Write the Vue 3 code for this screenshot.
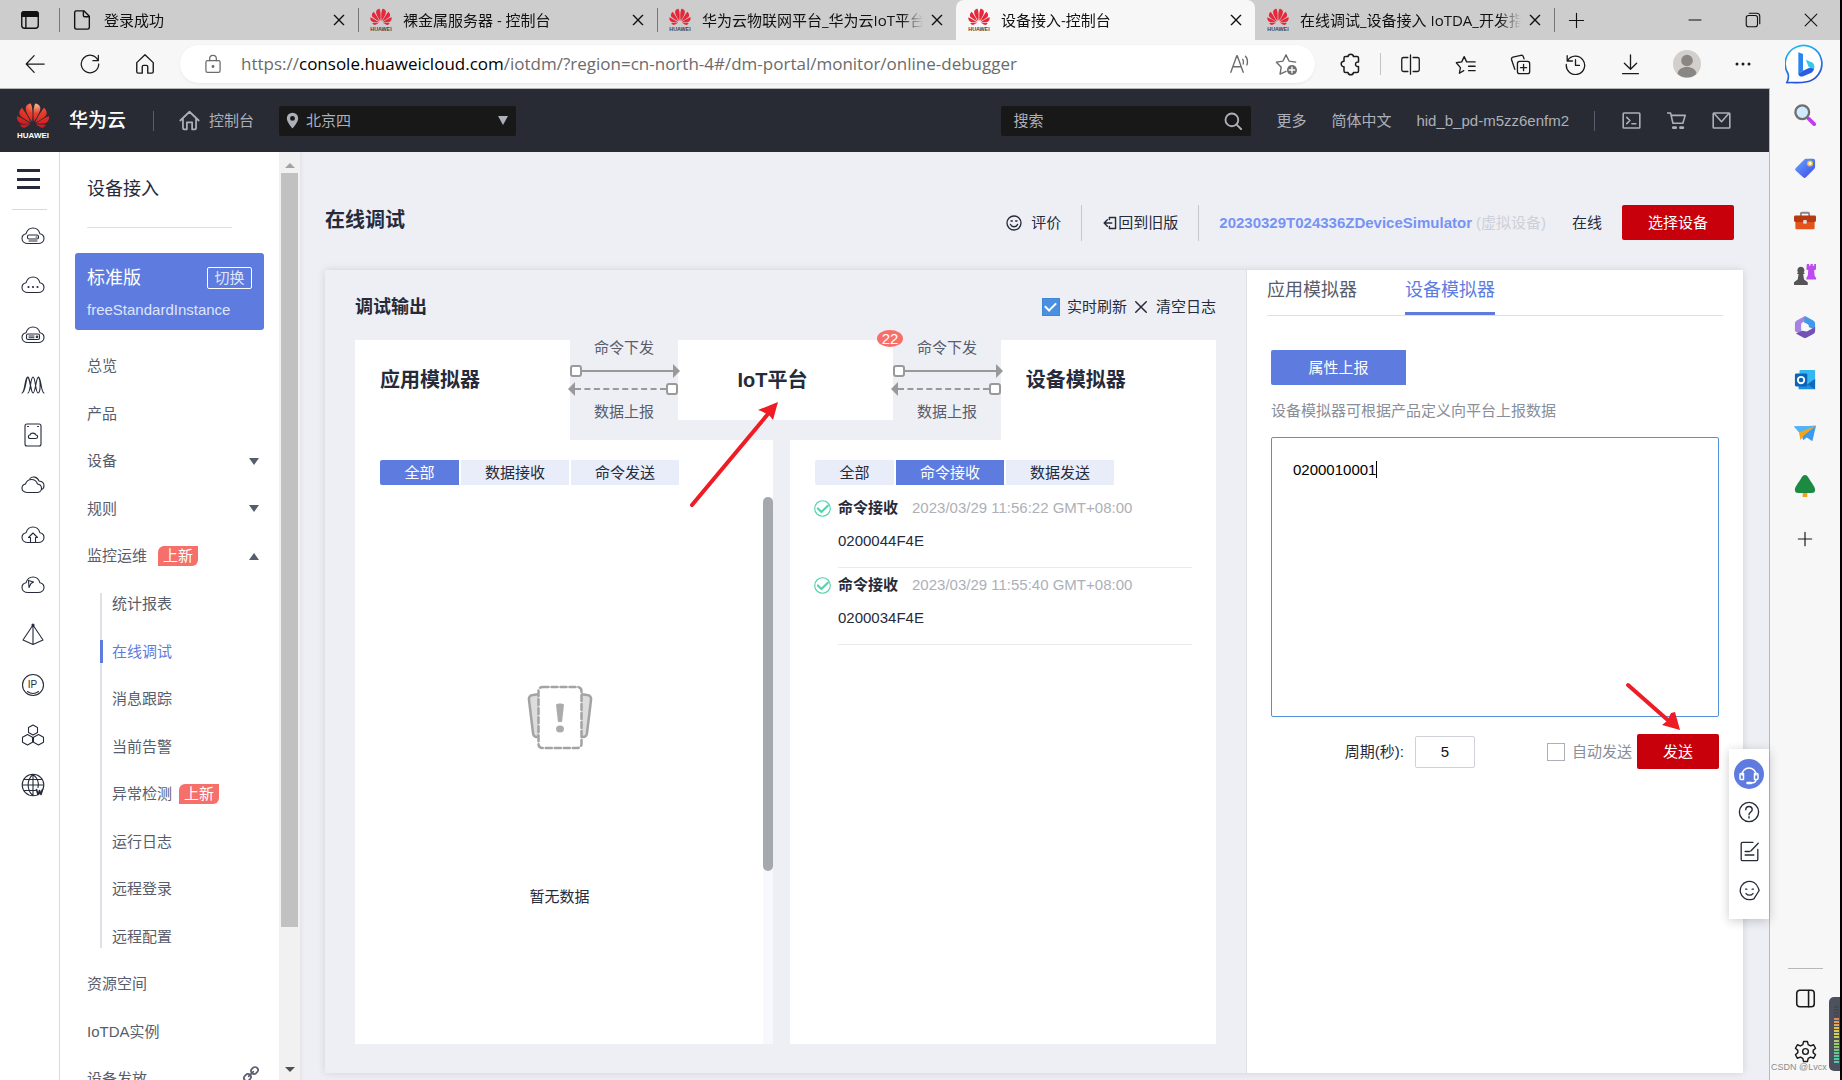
<script setup>
import { h, ref } from 'vue'

const cloud = '<path d="M7 19.500C3.500 19.500 1 17.400 1 14.500c0-2.500 1.700-4.200 4-4.700C6 6.500 8.700 4 12 4s6 2.500 7 5.800c2.300.5 4 2.200 4 4.700 0 2.900-2.500 5-6 5z"/>'
const huawei = 'M3.67 6.14S1.82 7.91 1.72 9.78v.35c.08 1.51 1.22 2.4 1.22 2.4 1.83 1.79 6.26 4.04 7.3 4.55 0 0 .06.03.1-.01l.02-.04v-.04C7.52 10.8 3.67 6.14 3.67 6.14zM9.65 18.6c-.02-.08-.1-.08-.1-.08l-7.38.26c.8 1.43 2.15 2.53 3.56 2.2.96-.25 3.16-1.78 3.88-2.3.06-.05.04-.09.04-.09zm.08-.78C6.49 15.63.21 12.28.21 12.28c-.15.46-.2.9-.21 1.3v.07c0 1.07.4 1.82.4 1.82.8 1.69 2.34 2.2 2.34 2.2.7.3 1.4.31 1.4.31.12.02 4.4 0 5.54 0 .05 0 .08-.05.08-.05v-.06c0-.03-.03-.05-.03-.05zM9.06 3.19a3.42 3.42 0 00-2.57 3.15v.41c.03.6.16 1.05.16 1.05.66 2.9 3.86 7.65 4.55 8.65.05.05.1.03.1.03a.1.1 0 00.06-.1c1.06-10.6-1.11-13.42-1.11-13.42-.32.02-1.19.23-1.19.23zm8.3 2.27s-.49-1.8-2.44-2.28c0 0-.57-.14-1.17-.22 0 0-2.18 2.81-1.12 13.43.01.07.06.08.06.08.07.03.1-.03.1-.03.72-1.03 3.9-5.76 4.55-8.64 0 0 .36-1.4.02-2.34zm-2.92 13.07s-.07 0-.09.05c0 0-.01.07.03.1.7.51 2.85 2 3.88 2.3 0 0 .16.05.43.06h.14c.69-.02 1.9-.37 3-2.26l-7.4-.25zm7.83-8.41c.14-2.06-1.94-3.97-1.94-3.98 0 0-3.85 4.66-6.67 10.8 0 0-.03.08.02.13l.04.01h.06c1.06-.53 5.46-2.77 7.28-4.54 0 0 1.15-.93 1.21-2.42zm1.52 2.14s-6.28 3.37-9.52 5.55c0 0-.05.04-.03.11 0 0 .03.06.07.06 1.16 0 5.56 0 5.67-.02 0 0 .57-.02 1.27-.29 0 0 1.56-.5 2.37-2.27 0 0 .73-1.45.17-3.14z'

const icons = {
  tabs: '<rect x="3" y="3" width="18" height="18" rx="3"/><path d="M3 8V6a3 3 0 013-3h12a3 3 0 013 3v2z" fill="currentColor"/><path d="M7.500 8v13"/>',
  doc: '<path d="M5 2h9l6 6v12a2 2 0 01-2 2H6a2 2 0 01-2-2V4a2 2 0 012-2zM13.500 2v5a1.500 1.500 0 001.500 1.500h5"/>',
  close: '<path d="M5 5l14 14M19 5L5 19"/>',
  plus: '<path d="M12 2v20M2 12h20"/>',
  minus: '<path d="M4 12h16"/>',
  restore: '<rect x="3" y="6" width="15" height="15" rx="3"/><path d="M7 3h10a4 4 0 014 4v10"/>',
  back: '<path d="M23 12H2M11 2L1.500 12l9.500 10"/>',
  reload: '<path d="M21.500 7.500A10.500 10.500 0 1022.500 12M22 1.500v6.500h-6.500"/>',
  home: '<path d="M3 10.500L12 2l9 8.500V20.500a1.500 1.500 0 01-1.500 1.500H15v-7a1.500 1.500 0 00-1.500-1.500h-3A1.500 1.500 0 009 15v7H4.500A1.500 1.500 0 013 20.500z"/>',
  lock: '<rect x="3.500" y="8" width="17" height="14" rx="2"/><path d="M8 8V5.500a4 4 0 018 0V8"/><circle cx="12" cy="15" r="1" fill="currentColor"/>',
  read: '<path d="M2 21L8.500 3h.5l6.500 18M4.500 15h8.500M15 7c1 1.500 1 3.500.5 5M18 3.500c2.500 3 2.500 6.500 1.500 9.500M14 2.500"/>',
  starplus: '<path d="M12 20l-6.500 3 1.300-7.500L1.500 10l7.200-1.200L12 2l3.300 6.800 7.200 1.200"/><circle cx="18.500" cy="18.500" r="5.500" fill="#6f6f6f" stroke="none"/><path d="M18.500 15.500v6M15.500 18.500h6" stroke="#fff"/>',
  ext: '<path d="M9 4.500a2.800 2.800 0 015.500 0H18a1.500 1.500 0 011.500 1.500v4c-4-.7-4 5.200 0 4.600V19a1.500 1.500 0 01-1.500 1.500h-3.500a2.800 2.800 0 01-5.500 0H6.500A1.500 1.500 0 015 19v-4.200a2.800 2.800 0 010-5.600V6a1.500 1.500 0 011.500-1.500z"/>',
  split: '<path d="M12 1v22M9 4H4a2 2 0 00-2 2v12a2 2 0 002 2h5M15 4h5a2 2 0 012 2v12a2 2 0 01-2 2h-5"/>',
  starlist: '<path d="M10 19l-5 3 1.200-6.500L1.500 10l6.200-1L10.500 3l2.800 6H23M15.500 14H23M15.500 19H23M14 9"/>',
  collect: '<rect x="8.500" y="8.500" width="14" height="14" rx="2.500"/><path d="M15.500 12v7M12 15.500h7M5.500 17.500L1.800 6.500A2.300 2.300 0 013.300 3.600L12.500 1.500a2.300 2.300 0 012.700 1.500l.8 2.500"/>',
  history: '<path d="M3 7.500A10.500 10.500 0 111.500 12M2.500 2v6h6M12 6.500V13h4.500"/>',
  download: '<path d="M12 1v16M5 10.500l7 7 7-7M3 22.500h18"/>',
  avatar: '<circle cx="12" cy="12" r="12" fill="#d2cfcc" stroke="none"/><circle cx="12" cy="9" r="5" fill="#8a8683" stroke="none"/><path d="M4 20.500c0-8 16-8 16 0a12 12 0 01-16 0z" fill="#8a8683" stroke="none"/>',
  dots: '<g fill="currentColor" stroke="none"><circle cx="4" cy="12" r="2"/><circle cx="12" cy="12" r="2"/><circle cx="20" cy="12" r="2"/></g>',
  bing: '<defs><linearGradient id="bg1" x1="0" y1="0" x2=".3" y2="1"><stop offset="0" stop-color="#22c3f3"/><stop offset="1" stop-color="#2353d8"/></linearGradient></defs><path d="M1 23.200c1-1.500 1.300-3.500.8-5.500A11 11 0 1112.200 22.800c-4 .8-7.500 0-11.200.4z" fill="#fff" stroke="url(#bg1)" stroke-width="1"/><path d="M8 5l2.800 1v10l-2.800 2z" fill="#2a86ee" stroke="none"/><path d="M8 17.800l2.800-1.800 3.200-1.500 3.300-1c.6 1.500-.3 3-1.500 3.700L11 19.300c-1.500.7-3-.2-3-1.500z" fill="#2a5de0" stroke="none"/><path d="M12.500 9.500l3.500 1.500c1.600.8 2 2.800 1.200 4l-3-1.200z" fill="#35c8e8" stroke="none"/>',
  chome: '<path d="M1.500 12L12 2l10.500 10M4.500 10v10.500a1.500 1.500 0 001.500 1.500h3v-8h6v8h3a1.500 1.500 0 001.500-1.500V10"/>',
  pin: '<path d="M12 1a8 8 0 00-8 8c0 5.500 8 14 8 14s8-8.500 8-14a8 8 0 00-8-8zm0 11.500A3.500 3.500 0 1112 5.500a3.500 3.500 0 010 7z" fill="currentColor" stroke="none"/>',
  search: '<circle cx="10.500" cy="10.500" r="8.500"/><path d="M16.500 16.500L23 23"/>',
  term: '<rect x="1.500" y="2.500" width="21" height="19" rx="1"/><path d="M6 8l4 4-4 4M12.500 16h5"/>',
  cart: '<path d="M0 2.500h4.500l3 13h12.500l3-10H5.500"/><path d="M8 21h3M17 21h3" stroke-width="3.500"/>',
  mail: '<rect x="1.500" y="2.500" width="21" height="19" rx="1"/><path d="M3 3.500l9 10 9-10"/>',
  cserver: cloud + '<rect x="6.500" y="11" width="11" height="4" rx="1.500"/><path d="M8 17h8M15 13h1"/>',
  cdots: cloud + '<g fill="currentColor" stroke="none"><circle cx="7.500" cy="14" r="1.100"/><circle cx="12" cy="14" r="1.100"/><circle cx="16.500" cy="14" r="1.100"/></g>',
  chost: cloud + '<rect x="5.500" y="11" width="13" height="5.500" rx="1.500"/><path d="M8 13h5M8 14.700h5"/><circle cx="16" cy="13.800" r=".8"/>',
  wave: '<path d="M1 20C4 20 4 4 6.500 4S9.500 20 12 20 15 4 17.500 4 20 20 23 20M2 19C5 16 5 4 7 4s3 16 5 16M7 20C9.500 20 9.500 4 12 4s2.500 16 5 16S20 8 17.500 4"/>',
  disk: '<rect x="4" y="1" width="16" height="22" rx="2"/><path d="M9.500 15.500c-3 0-2.500-3.500-.5-3.500.7-2.500 5-2.500 6 0 2.200 0 2.200 3.500-.3 3.500z"/><path d="M6.500 3.500h1M16.500 3.500h1"/>',
  clouds: '<path d="M6 19.500c-3.200 0-5-2-5-4.300 0-2.400 1.600-3.800 3.500-4.200C5.500 8 8 6.500 10.500 6.500S15.500 8 16.500 11c2.500.4 4 2 4 4.200 0 2.400-2 4.300-4.500 4.300z"/><path d="M9 5.500C11 3 16.500 3.500 18 8c3 .3 5 2.200 5 4.700 0 2-1 3.200-2.500 3.800"/>',
  cup: cloud + '<path d="M9.500 19v-4.500H7.500L12 10l4.500 4.500h-2V19"/>',
  cplane: cloud + '<path d="M7.500 7.500l5 1.500-2.500 1.500-2 4z"/>',
  prism: '<path d="M12 2L2 17l10 4.500L22 17zM12 2v19.500"/><circle cx="12" cy="2" r="1" fill="currentColor"/>',
  ring: '<circle cx="12" cy="12" r="10.500"/><path d="M6.500 18.500c3.500 2.500 7.500 2.500 11 0"/>',
  hex: '<path d="M12 2l4.500 2.500v5L12 12 7.500 9.500v-5zM6.500 11.500l5 2.800v5L6.500 22l-5-2.700v-5zM17.500 11.500l5 2.800v5l-5 2.700-5-2.700v-5z"/>',
  globe: '<circle cx="12" cy="12" r="10.800"/><path d="M1.500 12h21M12 1.500v21M3.500 6.500h17M3.500 17.500h11M12 1.500c-6.500 5-6.500 16 0 21M12 1.500c5 4 6 9 5 13"/><path d="M15.500 16.500l1.500 5 1.500-4 1.500 4 1.500-5" stroke-width="1.600"/>',
  link: '<g transform="rotate(45 12 12)"><rect x="7.500" y="-1" width="9" height="11" rx="4.500"/><rect x="7.500" y="14" width="9" height="11" rx="4.500"/><path d="M12 7v10"/></g>',
  smile: '<circle cx="12" cy="12" r="10.500"/><path d="M6.500 14a6 6 0 0011 0M7.500 9h2M14.500 9h2"/>',
  exit: '<path d="M2 12h13M7.500 6.500L2 12l5.500 5.500M11 6V2.500h10.500v19H11V18"/>',
  ok: '<circle cx="12" cy="12" r="11" stroke-width="1.600"/><path d="M5.500 12l5 5 9-9" stroke-width="3"/>',
  empty: '<g fill="#ddd" stroke="#a3a3a3" stroke-width="2.500"><path d="M13 9L6 10a4 4 0 00-4 5l4 33a4 4 0 004 4h4zM53 9l7 1a4 4 0 014 5l-4 33a4 4 0 01-4 4h-4z"/><rect x="11.500" y="2" width="43" height="61" rx="4" fill="#fff" stroke-dasharray="6 3"/></g><path d="M29 20c0-2 8-2 8 0l-2 17h-4z" fill="#ababab" stroke="none"/><ellipse cx="33" cy="44" rx="4" ry="3.500" fill="#ababab" stroke="none"/>',
  headset: '<path d="M5 13a7 7 0 0114 0M5 11.500H4a1 1 0 00-1 1v4a1 1 0 001 1h2.500v-6zM19 11.500h1a1 1 0 011 1v4a1 1 0 01-1 1h-2.500v-6zM19 17.500c0 2.500-2 3.500-5 3.500"/><path d="M10.500 21H14" stroke-width="2.500"/>',
  help: '<circle cx="12" cy="12" r="10.500"/><path d="M8.500 9.500a3.500 3.500 0 117 0c0 2.500-3.500 2.500-3.500 5.500M12 17v1.500"/>',
  edit: '<path d="M16 1.500H4a1.500 1.500 0 00-1.500 1.500v18A1.500 1.500 0 004 22.500h16a1.500 1.500 0 001.500-1.500V9.500M22 2.500l-8.500 9M7 12h5M7 16h10"/>',
  face: '<path d="M22 9A10.500 10.500 0 1014 22.300L17 21.500M22 9l1 3-6 9.500"/><path d="M8 15.500c2 2.500 6 2.500 8 0M7.500 10.500h1.500M15 10.500h1.500"/>',
  lens: '<path d="M16 16l6 6" stroke="#c13bf0" stroke-width="4"/><circle cx="9" cy="9" r="7.500" fill="#cfeafc" stroke="#6f6f6f" stroke-width="2.500"/>',
  tag: '<defs><linearGradient id="tg" x1="0" y1="0" x2="1" y2="1"><stop offset="0" stop-color="#6aa7f8"/><stop offset="1" stop-color="#3c47ee"/></linearGradient></defs><path d="M13 2h8a2 2 0 012 2v7a3 3 0 01-1 2l-9 9a2 2 0 01-3 0L2 15a2 2 0 010-3l9-9a3 3 0 012-1z" fill="url(#tg)" stroke="none"/><circle cx="17.500" cy="7" r="2.500" fill="#fff" stroke="#f8c51c" stroke-width="1.500"/>',
  box: '<path d="M7.500 7V4a1 1 0 011-1h7a1 1 0 011 1v3" stroke="#888" stroke-width="2"/><rect x="1.500" y="10" width="21" height="11" rx="1.500" fill="#e2541c" stroke="none"/><rect x="0" y="6" width="24" height="7" rx="1.500" fill="#b93a10" stroke="none"/><rect x="10" y="11" width="4" height="4" rx="1" fill="#ddd" stroke="none"/>',
  chess: '<path d="M14 1h2.500v2H18V1h2.500v2H22V1h2v6l-2 1 .5 6L24 16v2H13.500v-2l1.500-2 .5-6-2-1z" fill="#bd4bf0" stroke="none"/><path d="M7.500 4a4 4 0 013 6.500h1V12H10l1 6 4 3v3H0v-3l4-3 1-6H3.500v-1.500h1A4 4 0 017.500 4z" fill="#555" stroke="none"/>',
  office: '<path d="M12 0L3.500 4.500A4 4 0 001 8v8.500l7 3.500V8l6-4z" fill="#a583e2" stroke="none"/><path d="M12 0l8.500 4.500A4 4 0 0123 8v7l-7-3-1-3-4-2z" fill="#3f9bea" stroke="none"/><path d="M23 12v4c0 2-1 3-2.500 4L14 23.500a4 4 0 01-4 0L2 19l7-3 5 1z" fill="#7352b8" stroke="none"/><path d="M12 7.500l4 2.200v4.500l-4 2.300-4-2.300V9.700z" fill="#f7f7f7" stroke="none"/>',
  outlook: '<rect x="6" y="1" width="17" height="14" rx="1" fill="#35b8f1" stroke="none"/><path d="M5 12l9 4 9-5v11H5z" fill="#1b8fe0" stroke="none"/><path d="M23 11v11l-8-5z" fill="#0f6cbd" stroke="none"/><rect x="1" y="5" width="13.500" height="14" rx="1.500" fill="#0a64ba" stroke="none"/><circle cx="7.700" cy="12" r="3.500" stroke="#fff" stroke-width="2"/>',
  plane: '<path d="M0 5l24-1-4 17-6-4-4 3-2-7z" fill="#3a9af0" stroke="none"/><path d="M0 5l24-1L7 13z" fill="#52b4f5" stroke="none"/><path d="M24 4L5.500 11.500l1.500 8 4-5z" fill="#f2a41a" stroke="none"/>',
  tree: '<rect x="9.500" y="18" width="5" height="6" fill="#f0a01c" stroke="none"/><path d="M12 0c2 0 3.500 2 5 5 2 3.500 6 8 6 11s-2 3.500-4 3.500H5c-2 0-4-.5-4-3.500s4-7.500 6-11c1.500-3 3-5 5-5z" fill="#1d8a42" stroke="none"/>',
  panel: '<rect x="2" y="2.500" width="20" height="19" rx="3.500"/><path d="M15.500 3v18.500"/>',
  gear: '<path d="M10 1.500h4l.8 3.300 2.500 1.400 3.200-1.200 2 3.600-2.500 2.200v2.400l2.500 2.200-2 3.600-3.200-1.200-2.500 1.400L14 22.500h-4l-.8-3.300-2.500-1.400L3.500 19l-2-3.600L4 13.200v-2.400L1.500 8.600l2-3.600 3.200 1.200 2.500-1.400z"/><circle cx="12" cy="12" r="3"/>',
}

function Icon(props) {
  return h('svg', {
    width: props.s, height: props.s, viewBox: `0 0 ${props.vb || 24} ${props.vb || 24}`,
    fill: 'none', stroke: 'currentColor', 'stroke-width': props.w || 1.5,
    'stroke-linecap': 'round', 'stroke-linejoin': 'round', 'aria-hidden': 'true', innerHTML: icons[props.n],
  })
}
Icon.props = ['n', 's', 'vb', 'w']

const browserTabs = [
  { title: '登录成功' },
  { title: '裸金属服务器 - 控制台', brand: true },
  { title: '华为云物联网平台_华为云IoT平台', brand: true },
  { title: '设备接入-控制台', brand: true, active: true },
  { title: '在线调试_设备接入 IoTDA_开发指', brand: true },
]
const toolIcons = ['split', 'starlist', 'collect', 'history', 'download']
const rail = ['cserver', 'cdots', 'chost', 'wave', 'disk', 'clouds', 'cup', 'cplane', 'prism', 'ring', 'hex', 'globe']
const edgeApps = ['lens', 'tag', 'box', 'chess', 'office', 'outlook', 'plane', 'tree']
const menu = [
  { t: '总览' }, { t: '产品' }, { t: '设备', a: 'down' }, { t: '规则', a: 'down' },
  { t: '监控运维', a: 'up', isNew: true },
]
const subMenu = ['统计报表', '在线调试', '消息跟踪', '当前告警', '异常检测', '运行日志', '远程登录', '远程配置']
const menuEnd = [{ t: '资源空间' }, { t: 'IoTDA实例' }, { t: '设备发放', link: true }]
const logs = [
  { time: '2023/03/29 11:56:22 GMT+08:00', data: '0200044F4E' },
  { time: '2023/03/29 11:55:40 GMT+08:00', data: '0200034F4E' },
]
const meter = ['#454955', '#454955', '#454955', '#454955', '#e0855c', '#e09a5c', '#e0a85c', '#dfc04f', '#dccb4f', '#d5d05a', '#c3cf5f', '#b4cc66', '#9fca6c', '#8cc872', '#78c67c', '#68c78c', '#5cc89a', '#54c9aa', '#52c9b4']
const live = ref(true)
const auto = ref(false)
const period = ref('5')
const payload = ref('0200010001')
</script>

<template>
  <div class="browser">
    <div class="tabstrip">
      <button class="tab-actions" aria-label="标签页"><Icon n="tabs" s="22" /></button>
      <div v-for="tab in browserTabs" :key="tab.title" class="tab" :class="{ active: tab.active }">
        <svg v-if="tab.brand" class="fav" width="21" height="24" viewBox="0 2 24 27">
          <path :d="huawei" fill="#e6283a" />
          <text x="12" y="28" text-anchor="middle" font-size="6" font-weight="700" fill="#444" font-family="Liberation Sans, sans-serif">HUAWEI</text>
        </svg>
        <Icon v-else n="doc" s="22" class="fav" />
        <span class="tab-title">{{ tab.title }}</span>
        <button class="tab-close" aria-label="关闭"><Icon n="close" s="16" w="2" /></button>
      </div>
      <button class="new-tab" aria-label="新建标签页"><Icon n="plus" s="17" w="1.6" /></button>
      <div class="win">
        <button aria-label="最小化"><Icon n="minus" s="18" /></button>
        <button aria-label="还原"><Icon n="restore" s="18" /></button>
        <button aria-label="关闭窗口"><Icon n="close" s="20" w="1.300" /></button>
      </div>
    </div>

    <div class="toolbar">
      <button class="tool" aria-label="后退"><Icon n="back" s="20" /></button>
      <button class="tool" aria-label="刷新"><Icon n="reload" s="20" /></button>
      <button class="tool" aria-label="主页"><Icon n="home" s="22" /></button>
      <div class="address">
        <Icon n="lock" s="20" />
        <div class="url">https://<b>console.huaweicloud.com</b>/iotdm/?region=cn-north-4#/dm-portal/monitor/online-debugger</div>
        <Icon n="read" s="22" />
        <Icon n="starplus" s="22" />
      </div>
      <button class="tool" aria-label="扩展"><Icon n="ext" s="24" /></button>
      <i class="bar" />
      <button v-for="n in toolIcons" :key="n" class="tool" :aria-label="n"><Icon :n="n" s="21" /></button>
      <button class="tool profile" aria-label="个人资料"><Icon n="avatar" s="28" /></button>
      <button class="tool" aria-label="更多工具"><Icon n="dots" s="18" /></button>
      <button class="tool bing" aria-label="Bing"><Icon n="bing" s="40" /></button>
    </div>

    <div class="window">
      <div class="site">
        <header class="header">
          <svg class="logo" width="32" height="38" viewBox="0 2 24 28">
            <defs><radialGradient id="hw" cx=".6" cy=".05" r=".9"><stop offset="0" stop-color="#f9b48c" /><stop offset=".4" stop-color="#e8402c" /><stop offset="1" stop-color="#cf1b20" /></radialGradient></defs>
            <path :d="huawei" fill="url(#hw)" />
            <text x="12" y="29" text-anchor="middle" font-size="6" font-weight="700" fill="#fff" font-family="Liberation Sans, sans-serif">HUAWEI</text>
          </svg>
          <strong class="brand">华为云</strong>
          <i class="vline" />
          <a href="#" class="console"><Icon n="chome" s="21" w="2" />控制台</a>
          <div class="region">
            <Icon n="pin" s="17" />
            <select aria-label="区域"><option>北京四</option></select>
            <i class="caret-down" />
          </div>
          <div class="searchbox">
            <input type="text" placeholder="搜索" aria-label="搜索">
            <button aria-label="搜索"><Icon n="search" s="18" w="2.500" /></button>
          </div>
          <a href="#" class="hlink">更多</a>
          <a href="#" class="hlink">简体中文</a>
          <a href="#" class="hlink">hid_b_pd-m5zz6enfm2</a>
          <i class="vline" />
          <button class="hicon" aria-label="命令行"><Icon n="term" s="19" w="2" /></button>
          <button class="hicon" aria-label="购物车"><Icon n="cart" s="19" w="2" /></button>
          <button class="hicon" aria-label="消息"><Icon n="mail" s="19" w="2" /></button>
        </header>

        <div class="workspace">
          <nav class="rail">
            <button class="burger" aria-label="服务列表"><i /><i /><i /></button>
            <a v-for="n in rail" :key="n" href="#" :aria-label="n">
              <Icon :n="n" s="24" w="1.100" />
              <span v-if="n === 'ring'" class="ip">IP</span>
            </a>
          </nav>

          <nav class="side">
            <h2>设备接入</h2>
            <div class="instance">
              <div class="instance-row"><span class="edition">标准版</span><button>切换</button></div>
              <span class="instance-name">freeStandardInstance</span>
            </div>
            <ul class="menu">
              <li v-for="m in menu" :key="m.t">
                <a href="#">{{ m.t }}</a><span v-if="m.isNew" class="new">上新</span><i v-if="m.a" class="tri" :class="m.a" />
              </li>
            </ul>
            <ul class="menu sub">
              <li v-for="s in subMenu" :key="s" :class="{ on: s === '在线调试' }">
                <a href="#">{{ s }}</a><span v-if="s === '异常检测'" class="new">上新</span>
              </li>
            </ul>
            <ul class="menu">
              <li v-for="m in menuEnd" :key="m.t"><a href="#">{{ m.t }}</a><Icon v-if="m.link" n="link" s="16" w="2.500" class="ext-link" /></li>
            </ul>
          </nav>
          <div class="scroll"><i class="tri up" /><div class="thumb" /><i class="tri down" /></div>

          <main class="main">
            <div class="page-head">
              <h1>在线调试</h1>
              <button class="plain rate"><Icon n="smile" s="16" w="2" />评价</button>
              <button class="plain old"><Icon n="exit" s="14" w="2.500" />回到旧版</button>
              <a href="#" class="device">20230329T024336ZDeviceSimulator</a>
              <span class="virtual">(虚拟设备)</span>
              <span class="online">在线</span>
              <button class="danger pick">选择设备</button>
            </div>

            <div class="panel">
              <section class="output">
                <div class="output-head">
                  <h2>调试输出</h2>
                  <label class="live"><input v-model="live" type="checkbox">实时刷新</label>
                  <button class="plain clear"><Icon n="close" s="18" w="2" />清空日志</button>
                </div>
                <div class="flow">
                  <div class="node edge">应用模拟器</div>
                  <div class="link">
                    <span>命令下发</span>
                    <div class="line send"><i class="knob" /><i class="dash" /><i class="head" /></div>
                    <div class="line reply"><i class="head" /><i class="dash" /><i class="knob" /></div>
                    <span>数据上报</span>
                  </div>
                  <div class="node mid">
                    IoT平台<em class="count">22</em>
                    <svg class="pointer to-iot" width="92" height="110" viewBox="0 0 92 110"><path d="M4 105L80 14" stroke="#ee1c25" stroke-width="4" stroke-linecap="round" /><path d="M90 2l-5 18-4-5-8-4-3-1z" fill="#ee1c25" /></svg>
                  </div>
                  <div class="link">
                    <span>命令下发</span>
                    <div class="line send"><i class="knob" /><i class="dash" /><i class="head" /></div>
                    <div class="line reply"><i class="head" /><i class="dash" /><i class="knob" /></div>
                    <span>数据上报</span>
                  </div>
                  <div class="node edge">设备模拟器</div>
                </div>
                <div class="logs">
                  <div class="log">
                    <div class="filters"><button class="on">全部</button><button>数据接收</button><button>命令发送</button></div>
                    <div class="empty"><Icon n="empty" s="66" vb="66" /><span>暂无数据</span></div>
                    <div class="log-scroll"><i /></div>
                  </div>
                  <div class="log">
                    <div class="filters"><button>全部</button><button class="on">命令接收</button><button>数据发送</button></div>
                    <article v-for="l in logs" :key="l.time" class="entry">
                      <Icon n="ok" s="17" />
                      <div><p><strong>命令接收</strong><time>{{ l.time }}</time></p><p>{{ l.data }}</p></div>
                    </article>
                  </div>
                </div>
              </section>

              <section class="sim">
                <div class="sim-tabs"><button>应用模拟器</button><button class="on">设备模拟器</button></div>
                <div class="sim-body">
                  <button class="report">属性上报</button>
                  <p class="hint">设备模拟器可根据产品定义向平台上报数据</p>
                  <div class="payload">
                    <textarea v-model="payload" aria-label="上报数据" spellcheck="false" />
                    <i class="caret" />
                  </div>
                  <div class="send-row">
                    <label for="period">周期(秒):</label>
                    <input id="period" v-model="period" type="text" class="period">
                    <label class="auto"><input v-model="auto" type="checkbox">自动发送</label>
                    <button class="danger send-btn">
                      发送
                      <svg class="pointer to-send" width="58" height="54" viewBox="0 0 58 54"><path d="M4 4l42 37" stroke="#ee1c25" stroke-width="4" stroke-linecap="round" /><path d="M56 49l-18-5 5-4 4-8 4-1z" fill="#ee1c25" /></svg>
                    </button>
                  </div>
                </div>
              </section>
            </div>

            <aside class="float">
              <button class="service" aria-label="客服"><Icon n="headset" s="24" /></button>
              <button aria-label="帮助"><Icon n="help" s="22" /></button>
              <button aria-label="反馈"><Icon n="edit" s="21" /></button>
              <button aria-label="评价"><Icon n="face" s="21" /></button>
            </aside>
          </main>
        </div>
      </div>

      <aside class="edgebar">
        <button v-for="n in edgeApps" :key="n" :aria-label="n"><Icon :n="n" s="22" /></button>
        <button aria-label="自定义"><Icon n="plus" s="16" w="1.800" /></button>
        <div class="edge-bottom">
          <button aria-label="侧栏"><Icon n="panel" s="21" w="1.800" /></button>
          <button aria-label="设置"><Icon n="gear" s="23" /></button>
        </div>
        <span class="mark">CSDN @Lvcx</span>
        <div class="meter"><i v-for="(c, i) in meter" :key="i" :style="{ background: c }" /></div>
      </aside>
    </div>
  </div>
</template>

<style>
body { margin: 0; overflow: hidden; }
</style>

<style scoped>
* { box-sizing: border-box; }
.browser { display: flex; flex-direction: column; height: 100vh; overflow: hidden; border-right: 2px solid #000; font: 15px/20px "Liberation Sans", "Noto Sans CJK SC", sans-serif; color: #252b3a; background: #f7f7f7; }
button { font: inherit; color: inherit; border: 0; background: none; padding: 0; display: inline-flex; align-items: center; justify-content: center; white-space: nowrap; }
a { color: inherit; text-decoration: none; }
h1, h2, p, ul { margin: 0; padding: 0; }
svg { flex: none; }

.tabstrip { flex: none; height: 40px; display: flex; background: #cdcdcd; color: #111; font-family: "Open Sans", "Noto Sans CJK SC", sans-serif; }
.tab-actions { width: 59px; flex: none; }
.tab { position: relative; width: 299px; min-width: 0; flex: 0 1 299px; display: flex; align-items: center; padding: 0 11px 0 12px; }
.tab::before { content: ""; position: absolute; left: 0; top: 8px; height: 24px; border-left: 1px solid #777; }
.tab.active { background: #f7f7f7; border-radius: 8px 8px 0 0; }
.tab.active::before, .tab.active + .tab::before { display: none; }
.fav { width: 22px; }
.tab-title { flex: 1; margin: 0 6px 0 11px; white-space: nowrap; overflow: hidden; mask-image: linear-gradient(90deg, #000 90%, transparent); }
.tab-close { width: 16px; }
.new-tab { width: 44px; flex: none; border-left: 1px solid #777; height: 24px; margin-top: 8px; }
.win { margin-left: auto; display: flex; }
.win button { width: 58px; }

.toolbar { flex: none; height: 48px; display: flex; align-items: center; padding-left: 7px; color: #1b1b1b; }
.tool { width: 55px; flex: none; height: 38px; }
.tool.profile { width: 57px; }
.tool.bing { width: 70px; }
.bar { height: 22px; border-left: 1px solid #c4c4c4; margin: 0 2px; }
.address { flex: 1; min-width: 0; height: 38px; margin: 0 8px; border-radius: 19px; background: #fff; box-shadow: 0 1px 3px #0001; display: flex; align-items: center; padding: 0 18px 0 23px; color: #6b6b6b; gap: 18px; }
.url { flex: 1; overflow: hidden; white-space: nowrap; font: 17px/24px "Open Sans", sans-serif; }
.url b { font-weight: 400; color: #000; }
.address svg:last-child { margin-left: 6px; }

.window { flex: 1; min-height: 0; display: flex; }
.site { flex: 1; min-width: 0; display: flex; flex-direction: column; border-top: 1px solid #b5b5b5; border-right: 1px solid #bababa; }
.header { flex: none; height: 63px; background: #282b33; color: #adb0b8; display: flex; align-items: center; padding: 0 38px 0 17px; }
.brand { font-size: 19px; color: #fff; margin: 0 27px 0 20px; font-weight: 500; }
.vline { height: 20px; border-left: 1px solid #575d6c; }
.console { display: flex; align-items: center; gap: 9px; margin: 0 25px; }
.region { width: 237px; height: 30px; background: #181818; border-radius: 2px; display: flex; align-items: center; padding: 0 8px 0 5px; gap: 5px; }
.region select { flex: 1; appearance: none; border: 0; background: none; color: inherit; font: inherit; padding: 0; }
.caret-down { border: 5px solid transparent; border-top: 9px solid #adb0b8; border-bottom: 0; }
.searchbox { margin-left: auto; width: 250px; height: 30px; background: #181818; border-radius: 2px; display: flex; align-items: center; padding: 0 9px 0 12px; }
.searchbox input { flex: 1; min-width: 0; border: 0; background: none; font: inherit; color: inherit; padding: 0; }
.searchbox input::placeholder { color: #adb0b8; }
.hlink { margin-left: 25px; white-space: nowrap; }
.header .hlink + .vline { margin: 0 1px 0 25px; }
.hicon { margin-left: 26px; }

.workspace { flex: 1; min-height: 0; display: flex; background: #fff; }
.rail { width: 60px; flex: none; border-right: 1px solid #d9d9d9; padding: 17px 12px 0; display: flex; flex-direction: column; overflow: hidden; }
.burger { flex-direction: column; justify-content: space-between; height: 20px; width: 23px; margin: 0 0 20px 5px; flex: none; }
.burger i { width: 23px; height: 3px; background: #252b3a; }
.rail a { flex: none; height: 50px; margin-left: 6px; padding-top: 2px; display: flex; align-items: center; justify-content: center; position: relative; }
.burger + a { border-top: 1px solid #d9d9d9; margin-left: 0; padding-left: 6px; }
.ip { position: absolute; font: 10px/12px "Liberation Sans", sans-serif; }

.side { width: 219px; flex: none; overflow: hidden; padding: 25px 15px 0; display: flex; flex-direction: column; color: #575d6c; }
.side h2 { font-size: 18px; line-height: 24px; font-weight: 400; color: #252b3a; padding-bottom: 26px; margin: 0 32px 0 12px; border-bottom: 1px solid #dfe1e6; }
.instance { flex: none; height: 77px; margin: 25px 0 12px; padding: 13px 12px 0; border-radius: 3px; background: #5e7ce0; color: #fff; }
.instance-row { display: flex; justify-content: space-between; align-items: center; height: 24px; }
.edition { font-size: 18px; }
.instance button { border: 1px solid #fff; border-radius: 2px; width: 45px; height: 22px; color: #dfe5fa; }
.instance-name { display: block; margin-top: 10px; color: #dfe5fa; }
.menu { list-style: none; padding: 0 5px 0 12px; }
.menu li { height: 48px; display: flex; align-items: center; }
.menu li:nth-child(even) { height: 47px; }
.menu .tri, .ext-link { margin-left: auto; }
.ext-link { align-self: start; margin-top: 11px; }
.tri { border: 5px solid transparent; }
.tri.down { border-top: 7px solid #575d6c; border-bottom: 0; }
.tri.up { border-bottom: 7px solid #575d6c; border-top: 0; }
.sub { position: relative; margin-left: 25px; padding-left: 12px; }
.sub::before { content: ""; position: absolute; left: 0; top: 13px; bottom: 12px; border-left: 2px solid #dfe1e6; }
.sub .on { color: #5e7ce0; position: relative; }
.sub .on::before { content: ""; position: absolute; left: -12px; top: 12px; width: 3px; height: 23px; background: #5e7ce0; }
.new { width: 40px; height: 20px; margin-left: 11px; background: #f66f6a; color: #fff; border-radius: 6px 0; text-align: center; }
.sub .new { margin-left: 7px; }
.scroll { width: 21px; flex: none; background: #f1f1f1; padding: 11px 2px 8px; display: flex; flex-direction: column; align-items: center; }
.scroll .tri.up { border-bottom: 5px solid #a3a3a3; }
.scroll .tri.down { margin-top: auto; border-top: 5px solid #505050; }
.thumb { width: 17px; height: 83%; margin-top: 5px; background: #c1c1c1; }

.main { position: relative; flex: 1; min-width: 0; background: #eeeff4; padding: 0 26px 7px 25px; display: flex; flex-direction: column; box-shadow: inset 4px 0 5px -3px #0001; }
.page-head { flex: none; height: 118px; padding: 23px 9px 0 0; display: flex; align-items: center; white-space: nowrap; }
h1 { font-size: 20px; line-height: 30px; flex: 1; margin-top: -5px; }
.plain { height: 36px; }
.rate { gap: 9px; padding-right: 20px; }
.old { gap: 1px; padding: 0 20px 0 21px; border: solid #c5c7cd; border-width: 0 1px; }
.device { color: #7693f5; font-weight: 700; margin: 0 4px 0 20px; }
.virtual { color: #cdd0d8; margin-right: 26px; }
.danger { position: relative; height: 35px; border-radius: 2px; background: #c7000b; color: #fff; }
.pick { width: 112px; margin-left: 20px; }

.panel { flex: 1; min-height: 0; display: flex; box-shadow: 0 0 8px #0000001f; }
.output { flex: 1; min-width: 0; padding: 0 30px 29px; display: flex; flex-direction: column; border-right: 1px solid #dfe1e6; }
.output-head { flex: none; height: 70px; padding-top: 4px; display: flex; align-items: center; }
.output-head h2 { font-size: 18px; flex: 1; }
label { display: flex; align-items: center; }
input[type=checkbox] { appearance: none; width: 18px; height: 18px; margin: 0 7px 0 0; border: 1px solid #adb0b8; background: #fff; }
input[type=checkbox]:checked { border-color: #3f86d4; background: #4a90e2; display: grid; place-items: center; }
input[type=checkbox]:checked::after { content: ""; width: 9px; height: 5px; border: solid #fff; border-width: 0 0 2px 2px; transform: rotate(-45deg); margin-bottom: 3px; }
.clear { gap: 6px; margin-left: 5px; }
.flow { flex: none; display: grid; grid-template-columns: 2fr 1fr 2fr 1fr 2fr; height: 100px; }
.node { background: #fff; height: 80px; font-size: 20px; font-weight: 700; display: flex; align-items: center; justify-content: center; position: relative; }
.node.mid { padding-right: 26px; }
.node.edge { height: 100px; justify-content: flex-start; padding: 0 0 20px 25px; }
.count { position: absolute; right: -10px; top: -10px; width: 26px; height: 17px; border-radius: 50%; background: #f66f6a; color: #fff; font: 15px/17px "Liberation Sans", sans-serif; text-align: center; }
.pointer { position: absolute; z-index: 3; fill: none; pointer-events: none; }
.to-iot { left: 10px; top: 60px; }
.link { display: flex; flex-direction: column; align-items: center; color: #575d6c; height: 84px; justify-content: space-between; margin-top: -2px; }
.line { display: flex; align-items: center; align-self: stretch; height: 12px; color: #999; position: relative; z-index: 1; }
.send { margin-right: -2px; }
.reply { margin-left: -2px; }
.knob { width: 12px; height: 12px; border: 2px solid #999; border-radius: 3px; background: #fff; }
.dash { flex: 1; border-top: 2px solid #999; }
.reply .dash { border-top-style: dashed; }
.head { border: 7px solid transparent; border-left-color: #999; border-right: 0; }
.reply .head { border: 7px solid transparent; border-right-color: #999; border-left: 0; }
.logs { flex: 1; min-height: 0; display: grid; grid-template-columns: 418fr 426fr; gap: 17px; }
.log { position: relative; background: #fff; padding: 20px 24px 0 25px; display: flex; flex-direction: column; }
.filters { display: flex; gap: 2px; flex: none; margin-bottom: 11px; }
.filters button { background: #e9edfa; height: 25px; width: 108px; }
.filters button:first-child { width: 79px; border-radius: 2px 0 0 2px; }
.filters .on { background: #5e7ce0; color: #fff; }
.empty { display: flex; flex-direction: column; align-items: center; padding: 189px 10px 0 0; gap: 136px; }
.log-scroll { position: absolute; right: 0; top: 57px; bottom: 0; width: 10px; background: #f7f8fd; }
.log-scroll i { display: block; height: 374px; border-radius: 5px; background: #a5a9ae; }
.entry { height: 77px; display: flex; gap: 7px; color: #50d4ab; margin-left: -1px; }
.entry svg { margin-top: 4px; }
.entry div { flex: 1; border-bottom: 1px solid #e9eaee; margin-bottom: 5px; color: #252b3a; padding-top: 2px; height: 72px; }
.entry p + p { margin-top: 13px; }
.entry time { margin-left: 14px; color: #adb0b8; }

.sim { width: 496px; flex: none; background: #fff; padding: 0 20px; }
.sim-tabs { display: flex; gap: 48px; height: 46px; border-bottom: 1px solid #dfe1e6; font-size: 18px; color: #575d6c; }
.sim-tabs button { padding-bottom: 3px; height: 45px; border-bottom: 3px solid transparent; }
.sim-tabs .on { color: #5e7ce0; border-color: #5e7ce0; }
.sim-body { padding: 34px 4px 0; }
.report { width: 135px; height: 35px; background: #5e7ce0; color: #fff; border-radius: 2px 0 0 2px; }
.hint { color: #8a8e99; margin: 16px 0; }
.payload { position: relative; height: 280px; }
textarea { display: block; width: 100%; height: 100%; border: 1px solid #5192d9; border-radius: 2px; padding: 22px 21px; resize: none; outline: 0; font: inherit; color: #000; }
.caret { position: absolute; left: 105px; top: 24px; width: 1px; height: 17px; background: #000; }
.send-row { display: flex; align-items: center; justify-content: flex-end; margin-top: 17px; }
.period { width: 60px; height: 32px; margin: 0 72px 0 11px; border: 1px solid #d0d2d8; border-radius: 2px; text-align: center; font: inherit; color: #111; padding: 0; }
.auto { color: #8a8e99; margin-right: 5px; }
.send-btn { width: 82px; }
.to-send { left: -13px; top: -53px; }

.float { position: absolute; right: 0; top: 597px; width: 40px; height: 170px; background: #fff; box-shadow: 0 2px 10px #0003; display: flex; flex-direction: column; align-items: center; padding-top: 10px; gap: 13px; z-index: 4; }
.float button { height: 26px; width: 30px; }
.float .service { height: 30px; border-radius: 50%; background: #5e7ce0; color: #fff; margin-bottom: -3px; }

.edgebar { position: relative; width: 70px; flex: none; display: flex; flex-direction: column; align-items: center; color: #1b1b1b; overflow: hidden; }
.edgebar button { height: 53px; flex: none; }
.edge-bottom { margin-top: auto; margin-bottom: 2px; border-top: 1px solid #b8b8b8; width: 35px; display: flex; flex-direction: column; align-items: center; padding-top: 3px; }
.mark { position: absolute; left: 1px; bottom: 5px; font-size: 9px; line-height: 16px; color: #8c8c8c; white-space: nowrap; }
.meter { position: absolute; right: 0; bottom: 9px; width: 11px; height: 74px; border-radius: 5px 0 0 5px; background: #4d515e; padding: 9px 1px 8px 5px; display: flex; flex-direction: column; justify-content: space-between; }
.meter i { height: 2px; }
</style>
